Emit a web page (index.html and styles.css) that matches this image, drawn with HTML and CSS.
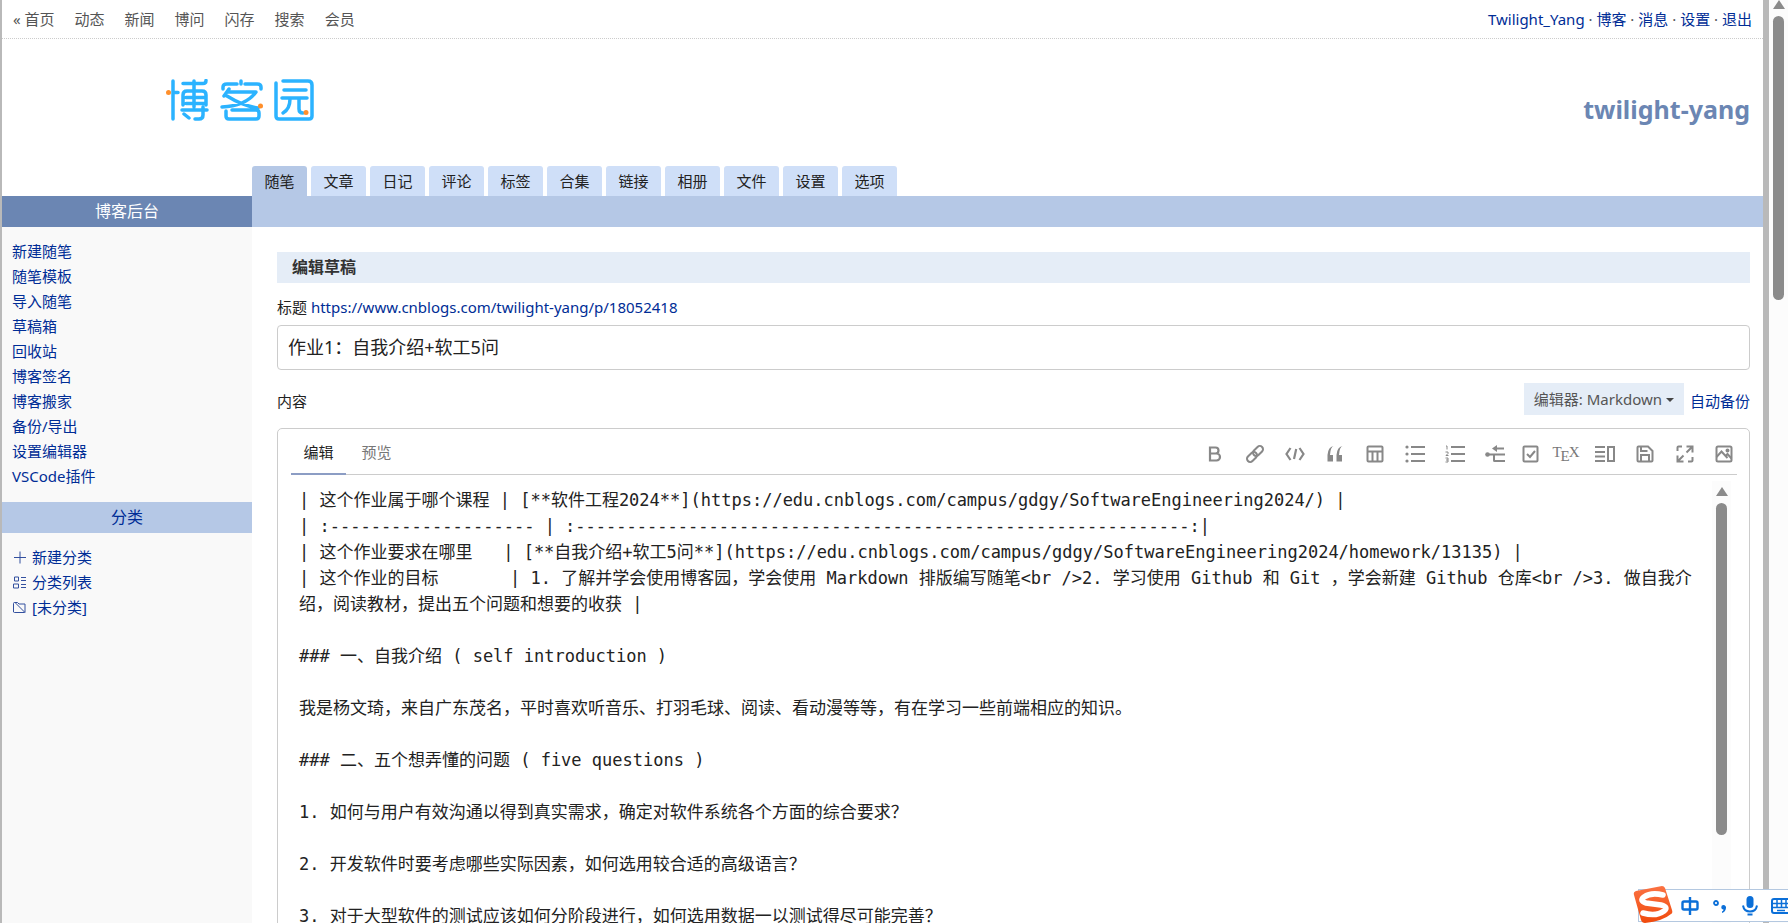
FILE: index.html
```html
<!DOCTYPE html>
<html lang="zh-CN">
<head>
<meta charset="utf-8">
<title>编辑草稿 - 博客后台</title>
<link rel="stylesheet" href="styles.css">
</head>
<body>
<div class="window">
  <div class="page">
    <header class="topbar">
      <nav class="site-nav">
        <a href="#">« 首页</a><a href="#">动态</a><a href="#">新闻</a><a href="#">博问</a><a href="#">闪存</a><a href="#">搜索</a><a href="#">会员</a>
      </nav>
      <div class="user-nav"><a href="#">Twilight_Yang</a> · <a href="#">博客</a> · <a href="#">消息</a> · <a href="#">设置</a> · <a href="#">退出</a></div>
    </header>
    <div class="banner">
      <a class="logo" href="#" aria-label="博客园">
        <svg width="148" height="42" viewBox="0 0 148 42" fill="none" stroke="#2bb3ff" stroke-width="3.500" stroke-linecap="round" stroke-linejoin="round">
          <path d="M7 2V40M7 13.500h5M17 4.500h20q3 0 3-3M28 2v26M17 26V16q0-4 4-4h15q4 0 4 4v10M20 18.500h18M20 24.500h18M16 31h25M37 28v8q0 4-4 4h-4M18 35l5 4"/>
          <path d="M57 10V8q0-3 4-3h10M79 5h12q4 0 4 3v2M75 2v3M63 10l-5 7M61 13h29q-10 14-34 15M61 17q16 10 31 12M60 32v5q0 3 3 3h27q3 0 3-3v-3q0-3-3-3H66"/>
          <path d="M110 4V37q0 3 3 3h30q3 0 3-3V6q0-4-4-4h-25M118 11h22M116 19h25M124 20q0 10-7 14M133 20v10q0 4 4 4"/>
          <g fill="#ff8f2b" stroke="none"><circle cx="2.500" cy="13.500" r="2.500"/><circle cx="94.500" cy="27" r="2.500"/><circle cx="140" cy="33.500" r="2.500"/></g>
        </svg>
      </a>
      <h1 class="blog-name">twilight-yang</h1>
    </div>
    <nav class="tabs">
      <a class="tab active" href="#">随笔</a><a class="tab" href="#">文章</a><a class="tab" href="#">日记</a><a class="tab" href="#">评论</a><a class="tab" href="#">标签</a><a class="tab" href="#">合集</a><a class="tab" href="#">链接</a><a class="tab" href="#">相册</a><a class="tab" href="#">文件</a><a class="tab" href="#">设置</a><a class="tab" href="#">选项</a>
    </nav>
    <div class="columns">
      <aside class="sidebar">
        <h2 class="side-title dark">博客后台</h2>
        <ul class="side-list">
          <li><a href="#">新建随笔</a></li><li><a href="#">随笔模板</a></li><li><a href="#">导入随笔</a></li><li><a href="#">草稿箱</a></li><li><a href="#">回收站</a></li><li><a href="#">博客签名</a></li><li><a href="#">博客搬家</a></li><li><a href="#">备份/导出</a></li><li><a href="#">设置编辑器</a></li><li><a href="#">VSCode插件</a></li>
        </ul>
        <h2 class="side-title">分类</h2>
        <ul class="side-list categories">
          <li><a href="#"><svg width="15" height="15" viewBox="0 0 15 15"><path d="M2 7.500h12M8 1.500v12"/></svg>新建分类</a></li>
          <li><a href="#"><svg width="15" height="15" viewBox="0 0 15 15"><path d="M2.500 2h4v4h-4zM1.500 9h5v4h-5zM9 2.500h5M9 5.500h5M9 9.500h5M9 12.500h5"/></svg>分类列表</a></li>
          <li><a href="#"><svg width="15" height="15" viewBox="0 0 15 15"><path d="M1.500 12V3.500q0-1 1-1h3l1.500 1.500h6v8q0 .5-.5.5h-10q-1 0-1-1M3 2.500l10 10"/></svg>[未分类]</a></li>
        </ul>
      </aside>
      <main class="main">
        <div class="strip"></div>
        <form class="content">
          <h2 class="section-title">编辑草稿</h2>
          <div class="title-row"><label for="post-title">标题</label> <a href="#">https://www.cnblogs.com/twilight-yang/p/18052418</a></div>
          <input class="title-input" id="post-title" type="text" value="作业1：自我介绍+软工5问">
          <div class="body-row">
            <label for="post-body">内容</label>
            <span class="editor-choice"><button class="dropdown" type="button">编辑器: Markdown<i class="caret"></i></button><a href="#">自动备份</a></span>
          </div>
          <div class="editor">
            <div class="editor-bar">
              <button class="mode active" type="button">编辑</button><button class="mode" type="button">预览</button>
              <div class="tools">
                <button type="button" aria-label="粗体"><svg width="18" height="18" viewBox="0 0 18 18"><path stroke-width="2.200" d="M4 2.500h5.500a3 3 0 0 1 0 6H4zM4 8.500h6.500a3.400 3.400 0 0 1 0 7H4z"/></svg></button>
                <button type="button" aria-label="链接"><svg width="18" height="18" viewBox="0 0 18 18"><g transform="rotate(-45 9 9)"><rect x="-1" y="5.800" width="11.500" height="6.400" rx="3.200"/><rect x="7.500" y="5.800" width="11.500" height="6.400" rx="3.200"/></g></svg></button>
                <button type="button" aria-label="代码"><svg width="20" height="18" viewBox="0 0 20 18"><path stroke-width="2.200" d="M5.500 3L1.500 9l4 6M14.500 3l4 6-4 6M11.200 4L9 14"/></svg></button>
                <button type="button" aria-label="引用"><svg width="18" height="18" viewBox="0 0 18 18"><path fill="#888" stroke="none" d="M7.500 1q-3 1-3.500 9h3v6.500H1.500V10Q2 2 7.500 1zM16.500 1q-3 1-3.500 9h3v6.500h-5.500V10q.5-8 6-9z"/></svg></button>
                <button type="button" aria-label="表格"><svg width="18" height="18" viewBox="0 0 18 18"><path d="M2.500 1.500h13q1 0 1 1v13q0 1-1 1h-13q-1 0-1-1v-13q0-1 1-1zM1.500 6.500h15M6.500 6.500v10M11.500 6.500v10"/></svg></button>
                <button type="button" aria-label="无序列表"><svg width="20" height="18" viewBox="0 0 20 18"><path stroke-width="2" d="M6 2h14M6 9h14M6 16h14"/><g fill="#888" stroke="none"><circle cx="2" cy="2" r="1.600"/><circle cx="2" cy="9" r="1.600"/><circle cx="2" cy="16" r="1.600"/></g></svg></button>
                <button type="button" aria-label="有序列表"><svg width="20" height="18" viewBox="0 0 20 18"><path stroke-width="2" d="M6 2h14M6 9h14M6 16h14"/><path stroke-width="1" d="M1 1h1v3.500M.5 7H3v1.500L1 10.500h2.500M.5 13H3v4H.5M1 15h2"/></svg></button>
                <button type="button" aria-label="子列表"><svg width="20" height="18" viewBox="0 0 20 18"><path stroke-width="2" d="M2 9.500h18M10 3.500h9M9 9.500v6q0 .5.5.5H20"/><g fill="#888" stroke="none"><circle cx="2.500" cy="9.500" r="2.300"/><path d="M7 3.500L12 0v7z"/></g></svg></button>
                <button class="narrow" type="button" aria-label="任务列表"><svg width="18" height="18" viewBox="0 0 18 18"><rect x="1.500" y="1.500" width="14" height="15" rx="1"/><path d="M5 9l3 3 5-6"/></svg></button>
                <button class="tex" type="button">T<sub>E</sub>X</button>
                <button type="button" aria-label="分屏"><svg width="20" height="18" viewBox="0 0 20 18"><path stroke-width="2" d="M0 2h10M0 7h10M0 11.500h10M0 16h10M13 2h6v14h-6z"/></svg></button>
                <button type="button" aria-label="保存"><svg width="18" height="18" viewBox="0 0 18 18"><path d="M2.500 1.500h9.500l4.500 4.500v9.500q0 1-1 1h-13q-1 0-1-1v-13q0-1 1-1zM5 1.500V6h6.500M5 16.500V10h8v6.500"/></svg></button>
                <button type="button" aria-label="全屏"><svg width="18" height="18" viewBox="0 0 18 18"><path d="M1.500 6V2.500q0-1 1-1H6M10.500 1.500h6v6M16 2l-5.500 5.500M1.500 10.500v6h6M2 16l5.500-5.500M16.500 12v3.500q0 1-1 1H12"/></svg></button>
                <button type="button" aria-label="图片"><svg width="18" height="18" viewBox="0 0 18 18"><rect x="1.500" y="1.500" width="15" height="15" rx="1.500"/><path d="M1.500 12l5-5.500 6 6.500M10.500 11l2-2 4 4.500"/><circle cx="12.500" cy="5.500" r="1"/></svg></button>
              </div>
            </div>
            <div class="editor-body">
              <textarea class="source" id="post-body" rows="18" spellcheck="false">| 这个作业属于哪个课程 | [**软件工程2024**](https://edu.cnblogs.com/campus/gdgy/SoftwareEngineering2024/) |
| :-------------------- | :------------------------------------------------------------:|
| 这个作业要求在哪里   | [**自我介绍+软工5问**](https://edu.cnblogs.com/campus/gdgy/SoftwareEngineering2024/homework/13135) |
| 这个作业的目标       | 1. 了解并学会使用博客园，学会使用 Markdown 排版编写随笔&lt;br /&gt;2. 学习使用 Github 和 Git ，学会新建 Github 仓库&lt;br /&gt;3. 做自我介绍，阅读教材，提出五个问题和想要的收获 |

### 一、自我介绍 ( self introduction )

我是杨文琦，来自广东茂名，平时喜欢听音乐、打羽毛球、阅读、看动漫等等，有在学习一些前端相应的知识。

### 二、五个想弄懂的问题 ( five questions )

1. 如何与用户有效沟通以得到真实需求，确定对软件系统各个方面的综合要求？

2. 开发软件时要考虑哪些实际因素，如何选用较合适的高级语言？

3. 对于大型软件的测试应该如何分阶段进行，如何选用数据一以测试得尽可能完善？</textarea>
              <div class="scroll inner" aria-hidden="true"><i class="arrow"></i><i class="thumb"></i></div>
            </div>
          </div>
        </form>
      </main>
    </div>
  </div>
  <div class="scroll outer" aria-hidden="true"><i class="arrow"></i><i class="thumb"></i></div>
</div>
<div class="ime">
  <svg class="ime-logo" width="40" height="40" viewBox="0 0 40 40">
    <defs><linearGradient id="orange" x1="0" y1="0" x2="0" y2="1"><stop offset="0" stop-color="#fb7243"/><stop offset="1" stop-color="#f04a0c"/></linearGradient></defs>
    <path fill="url(#orange)" d="M3 6L29 1q2 0 3 2l7 22q1 3-1 4-8 7-26 9-3 0-4-3L1 10q-1-3 2-4z"/>
    <path fill="none" stroke="#fff" stroke-width="5.500" stroke-linecap="round" d="M30 10Q18 7 11 12q-5 4 2 6l15 2q8 2 3 6-8 6-21 2"/>
  </svg>
  <svg width="18" height="18" viewBox="0 0 18 18"><rect x="1.500" y="4.500" width="15" height="8" rx="1.500" stroke-width="2.400"/><path stroke-width="2.400" d="M9 0v18"/></svg>
  <svg width="18" height="18" viewBox="0 0 18 18"><circle cx="5" cy="6" r="2" stroke-width="1.800"/><path fill="#0b6fd8" stroke="none" d="M12.500 8a2.500 2.500 0 0 1 2.500 3q-.5 4-4 5v-1.500q1.500-.5 1.500-2a2.200 2.200 0 0 1 0-4.500z"/></svg>
  <svg width="18" height="20" viewBox="0 0 18 20"><rect x="5.500" y="0" width="7" height="12" rx="3.500" fill="#0b6fd8" stroke="none"/><path stroke-width="2" d="M2 9.500q1 6 7 6t7-6M6.500 18.500h5"/></svg>
  <svg width="20" height="18" viewBox="0 0 20 18"><rect x="1" y="2" width="18" height="14" rx="2" stroke-width="2"/><path stroke-width="1.500" d="M2 6.500h17M2 10.500h17M6 3v8M10.500 3v8M15 3v8M6 13.500h8"/></svg>
</div>
</body>
</html>
```
FILE: styles.css
```css
* { box-sizing: border-box; }
body {
  margin: 0;
  overflow: hidden;
  font-family: "Noto Sans", "Noto Sans CJK SC", sans-serif;
  font-size: 15px;
  line-height: 25px;
  color: #222;
  background: #fff;
}
a { color: #002d96; text-decoration: none; }
button, input, textarea { font: inherit; color: inherit; }
button { border: 0; background: none; padding: 0; }
h1, h2, ul { margin: 0; padding: 0; }

.window { display: flex; height: 100vh; }
.page {
  flex: 1;
  min-width: 0;
  display: flex;
  flex-direction: column;
  overflow: hidden;
  border-left: 2px solid #b9b9b9;
  border-right: 6px solid #b9b9b9;
}

.topbar {
  flex: none;
  display: flex;
  justify-content: space-between;
  height: 39px;
  padding: 7px 11px 0;
  border-bottom: 1px dotted #ccc;
  color: #555;
}
.site-nav { display: flex; gap: 20px; }
.site-nav a { color: #555; }

.banner {
  flex: none;
  display: flex;
  justify-content: space-between;
  height: 127px;
  padding: 40px 13px 0 164px;
}
.logo { height: 42px; }
.blog-name { padding-top: 12px; font-size: 25px; line-height: 36px; color: #6b86b3; }

.tabs { flex: none; display: flex; gap: 4px; padding-left: 250px; }
.tab {
  width: 55px;
  height: 30px;
  line-height: 30px;
  text-align: center;
  color: #222;
  background: #cfdff8;
  border-radius: 3px 3px 0 0;
}
.tab.active { background: #b5c8e6; }

.columns { flex: 1; min-height: 0; display: flex; }
.sidebar { flex: none; width: 250px; background: #f9f9f9; }
.side-title {
  font-size: 16px;
  font-weight: 400;
  line-height: 31px;
  text-align: center;
  color: #002d96;
  background: #b5c8e6;
}
.side-title.dark { color: #fff; background: #6b86b3; }
.side-list { list-style: none; padding: 12px 10px 13px; }
.side-list li { height: 25px; }
.side-list a { display: flex; align-items: center; gap: 5px; }
.side-list svg { fill: none; stroke: #33509f; stroke-width: 1; }

.main { flex: 1; min-width: 0; }
.strip { height: 31px; background: #b5c8e6; }
.content { padding: 25px 13px 0 25px; }
.section-title { padding-left: 15px; font-size: 16px; line-height: 31px; color: #333; background: #e5edf7; }
.title-row { margin-top: 12px; }
.title-input {
  display: block;
  width: 100%;
  height: 45px;
  margin-top: 5px;
  padding: 0 10px 3px;
  font-size: 18px;
  border: 1px solid #ccc;
  border-radius: 4px;
}
.body-row { display: flex; justify-content: space-between; align-items: center; margin-top: 13px; height: 32px; }
.body-row label, .editor-choice > a { padding-top: 4px; }
.editor-choice { display: flex; align-items: center; gap: 6px; }
.dropdown { height: 32px; padding: 0 10px; color: #555; background: #e5edf7; }
.caret { display: inline-block; margin-left: 4px; vertical-align: 3px; border: 4px solid transparent; border-top-color: #444; border-bottom: 0; }

.editor { margin-top: 13px; padding: 0 12px 0 13px; border: 1px solid #ccc; border-radius: 5px; }
.editor-bar { display: flex; height: 46px; border-bottom: 1px solid #ccc; }
.mode { width: 55px; height: 46px; padding-top: 3px; color: #777; border-bottom: 2px solid transparent; }
.mode + .mode { margin-left: 3px; }
.mode.active { color: #222; border-bottom-color: #8c9dc4; }
.tools { display: flex; align-items: center; margin-left: auto; padding-top: 5px; }
.tools button { display: flex; align-items: center; justify-content: center; width: 40px; height: 30px; }
.tools button:last-child { width: 26px; margin-left: 6px; }
.tools .narrow { width: 32px; }
.tools svg { fill: none; stroke: #888; stroke-width: 2; overflow: visible; }
.tools .tex { width: 38px; align-items: flex-start; font: 15px/26px "Liberation Serif", serif; color: #777; }
.tex sub { font-size: 15px; line-height: 26px; margin: 4px -1px 0; vertical-align: baseline; }

.editor-body { display: flex; padding-top: 6px; }
.source {
  display: block;
  flex: 1;
  min-width: 0;
  padding: 6px 10px 0 8px;
  border: 0;
  outline: 0;
  resize: none;
  overflow: hidden;
  font-family: "DejaVu Sans Mono", "Noto Sans CJK SC", monospace;
  font-size: 17px;
  line-height: 26px;
  color: #222;
  background: none;
}

.scroll { display: flex; flex-direction: column; align-items: center; background: #fcfcfc; }
.scroll .arrow { border: 6px solid transparent; border-bottom: 9px solid #8b8b8b; border-top: 0; }
.scroll .thumb { width: 11px; margin-top: 7px; border-radius: 6px; background: #8b8b8b; }
.outer { flex: none; width: 19px; }
.outer .thumb { height: 284px; }
.inner { width: 19px; margin-right: 6px; padding-top: 6px; }
.inner .thumb { height: 332px; }

.ime {
  position: fixed;
  right: -10px;
  bottom: 1px;
  display: flex;
  align-items: center;
  gap: 12px;
  height: 33px;
  padding-right: 6px;
  background: #fff;
  border: 1px solid #b4c8e0;
}
.ime svg { flex: none; fill: none; stroke: #0b6fd8; }
.ime .ime-logo { margin: -2px -4px 0 -6px; stroke: none; }
```
